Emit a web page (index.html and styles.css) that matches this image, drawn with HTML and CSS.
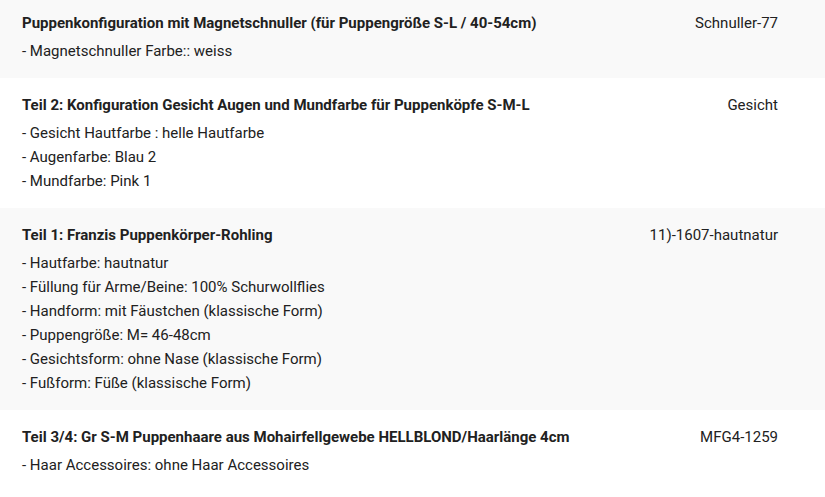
FILE: index.html
```html
<!DOCTYPE html>
<html lang="de">
<head>
<meta charset="utf-8">
<title>Konfiguration</title>
<link rel="stylesheet" href="styles.css">
</head>
<body>
<div class="list">
  <div class="row alt">
    <div class="info">
      <div class="title">Puppenkonfiguration mit Magnetschnuller (für Puppengröße S-L / 40-54cm)</div>
      <div class="opt">- Magnetschnuller Farbe:: weiss</div>
    </div>
    <div class="sku">Schnuller-77</div>
  </div>
  <div class="row">
    <div class="info">
      <div class="title">Teil 2: Konfiguration Gesicht Augen und Mundfarbe für Puppenköpfe S-M-L</div>
      <div class="opt">- Gesicht Hautfarbe : helle Hautfarbe</div>
      <div class="opt">- Augenfarbe: Blau 2</div>
      <div class="opt">- Mundfarbe: Pink 1</div>
    </div>
    <div class="sku">Gesicht</div>
  </div>
  <div class="row alt">
    <div class="info">
      <div class="title">Teil 1: Franzis Puppenkörper-Rohling</div>
      <div class="opt">- Hautfarbe: hautnatur</div>
      <div class="opt">- Füllung für Arme/Beine: 100% Schurwollflies</div>
      <div class="opt">- Handform: mit Fäustchen (klassische Form)</div>
      <div class="opt">- Puppengröße: M= 46-48cm</div>
      <div class="opt">- Gesichtsform: ohne Nase (klassische Form)</div>
      <div class="opt">- Fußform: Füße (klassische Form)</div>
    </div>
    <div class="sku">11)-1607-hautnatur</div>
  </div>
  <div class="row">
    <div class="info">
      <div class="title">Teil 3/4: Gr S-M Puppenhaare aus Mohairfellgewebe HELLBLOND/Haarlänge 4cm</div>
      <div class="opt">- Haar Accessoires: ohne Haar Accessoires</div>
    </div>
    <div class="sku">MFG4-1259</div>
  </div>
</div>
</body>
</html>
```
FILE: styles.css
```css
html, body {
  margin: 0;
  padding: 0;
  background: #ffffff;
}
body {
  font-family: Roboto, "Liberation Sans", sans-serif;
  font-size: 15px;
  color: #212121;
  overflow: hidden;
}
.list {
  margin-top: -4px;
}
.row {
  display: flex;
  justify-content: space-between;
  padding: 16px 47px 15px 22px;
  background: #ffffff;
}
.row.alt {
  background: #f9f9f9;
}
.info {
  display: flex;
  flex-direction: column;
}
.title {
  font-weight: 700;
  line-height: 22px;
  margin-bottom: 5px;
}
.opt {
  line-height: 24px;
}
.sku {
  line-height: 22px;
  text-align: right;
  white-space: nowrap;
}
```
